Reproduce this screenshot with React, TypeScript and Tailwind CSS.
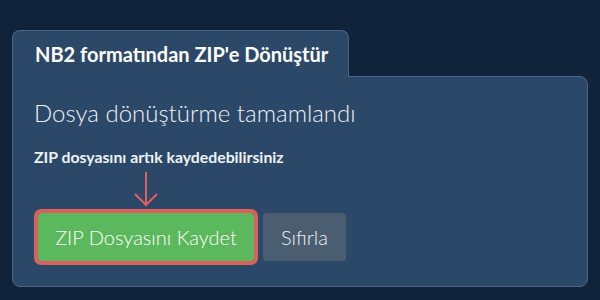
export default function App() {
  return (
    <div
      className="w-[600px] h-[300px] bg-[#10233a] px-[12px] pt-[30px]"
      style={{ fontFamily: 'Lato, "Noto Sans", sans-serif' }}
    >
      {/* Tab header */}
      <div className="relative z-10 -mb-px flex h-[47px] w-[337px] items-center rounded-t-lg border border-b-0 border-[#4b6586] bg-[#2c4868] pl-[22px]">
        <span className="text-[20px] font-bold text-white">NB2 formatından ZIP'e Dönüştür</span>
      </div>

      {/* Panel */}
      <div className="h-[211px] rounded-b-lg rounded-tr-lg border border-[#4b6586] bg-[#2c4868] px-[21px] pt-[21px]">
        <h2 className="text-[24px] font-light leading-[30px] text-[#eef2f6]">Dosya dönüştürme tamamlandı</h2>
        <p className="mt-[19px] text-[15.8px] font-bold leading-[20px] text-[#eef2f6]">
          ZIP dosyasını artık kaydedebilirsiniz
        </p>

        <div className="ml-[99px] mt-[4px] h-[36px] w-[26px]">
          <svg width="26" height="36" viewBox="0 0 26 36" fill="none">
            <path d="M13 1 V34 M2 23 L13 34 L24 23" stroke="#e0605c" strokeWidth="2" />
          </svg>
        </div>

        <div className="mt-[6px] flex items-center gap-[9px] pl-[4px]">
          <button className="h-[48px] w-[216px] rounded-[3px] bg-[#5cb85c] text-[20px] font-light text-white outline-4 outline-[#db5f5a]">
            ZIP Dosyasını Kaydet
          </button>
          <button className="h-[48px] w-[83px] rounded-[4px] bg-[#4b5d70] text-[20px] font-light text-[#eef1f4]">
            Sıfırla
          </button>
        </div>
      </div>
    </div>
  )
}
